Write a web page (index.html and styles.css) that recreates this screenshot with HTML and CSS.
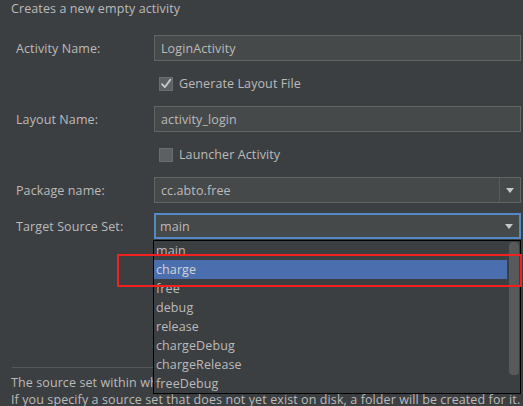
FILE: index.html
```html
<!DOCTYPE html>
<html>
<head>
<meta charset="utf-8">
<link rel="stylesheet" href="styles.css">
</head>
<body>
<div class="page">
  <div class="desc">Creates a new empty activity</div>
  <div class="form">
    <div class="label">Activity Name:</div>
    <div class="field"><span class="value">LoginActivity</span></div>

    <div class="check-row">
      <span class="box checked"><svg width="14" height="14" viewBox="0 0 14 14"><path d="M3 7.2 L5.8 10.2 L11.4 2.6" fill="none" stroke="#c9c9c9" stroke-width="1.8" stroke-linecap="round" stroke-linejoin="round"/></svg></span>
      <span class="check-text">Generate Layout File</span>
    </div>

    <div class="label">Layout Name:</div>
    <div class="field"><span class="value">activity_login</span></div>

    <div class="check-row">
      <span class="box"></span>
      <span class="check-text">Launcher Activity</span>
    </div>

    <div class="label top">Package name:</div>
    <div class="field combo top"><span class="value">cc.abto.free</span><span class="arrow-btn sep"><svg width="8" height="5" viewBox="0 0 8 5"><path d="M0 0 H8 L4 5 Z" fill="#c8c8c8"/></svg></span></div>

    <div class="label">Target Source Set:</div>
    <div class="field combo focused"><span class="value">main</span><span class="arrow-btn"><svg width="8" height="5" viewBox="0 0 8 5"><path d="M0 0 H8 L4 5 Z" fill="#c8c8c8"/></svg></span></div>
  </div>

  <div class="sep-line"></div>
  <div class="help">
    <div>The source set within which to generate new project files.</div>
    <div>If you specify a source set that does not yet exist on disk, a folder will be created for it.</div>
  </div>
</div>

<div class="popup">
  <ul class="list">
    <li>main</li>
    <li class="selected">charge</li>
    <li>free</li>
    <li>debug</li>
    <li>release</li>
    <li>chargeDebug</li>
    <li>chargeRelease</li>
    <li>freeDebug</li>
  </ul>
  <div class="scrollbar"><div class="thumb"></div></div>
</div>

<div class="highlight-mark"></div>
</body>
</html>
```

FILE: styles.css
```css
html, body {
  margin: 0;
  padding: 0;
}
body {
  width: 523px;
  height: 406px;
  overflow: hidden;
  position: relative;
  background: #3c3f41;
  color: #bbbbbb;
  font-family: "Open Sans", "Noto Sans", sans-serif;
  font-size: 12.5px;
  letter-spacing: 0.1px;
}
.page {
  display: flex;
  flex-direction: column;
}
.desc {
  padding-left: 11px;
  line-height: 18px;
}
.form {
  margin-top: 17px;
  padding-left: 16px;
  display: grid;
  grid-template-columns: 138px 367px;
  grid-template-rows: 26px 45px 26px 45px 36px 26px;
}
.label {
  display: flex;
  align-items: center;
  height: 26px;
}
.field {
  box-sizing: border-box;
  height: 26px;
  border: 1px solid #646464;
  background: #45494a;
  display: flex;
  align-items: center;
}
.field .value {
  flex: 1;
  padding-left: 6px;
}
.field.focused {
  border: 2px solid #5389c4;
}
.field.focused .value {
  padding-left: 4px;
}
.arrow-btn {
  width: 20px;
  align-self: stretch;
  display: flex;
  align-items: center;
  justify-content: center;
}
.arrow-btn.sep {
  border-left: 1px solid #5a5a5a;
}
.focused .arrow-btn {
  width: 21px;
}
.check-row {
  grid-column: 2;
  display: flex;
  align-items: center;
  padding-left: 5px;
}
.box {
  box-sizing: border-box;
  width: 14px;
  height: 14px;
  background: #5d6063;
  border: 1px solid #6a6d70;
  display: flex;
}
.box svg {
  margin: -1px;
}
.check-text {
  margin-left: 6px;
}
.sep-line {
  margin: 128px 12px 0 12px;
  height: 1px;
  background: #555759;
}
.help {
  padding: 6px 0 0 11px;
  line-height: 17px;
  white-space: nowrap;
}
.popup {
  position: absolute;
  left: 153px;
  top: 240px;
  width: 368px;
  height: 154px;
  box-sizing: border-box;
  border: 1px solid #000;
  background: #3c3f41;
  display: flex;
}
.list {
  list-style: none;
  margin: 0;
  padding: 0;
  flex: 1;
}
.list li {
  height: 19px;
  line-height: 19px;
  padding-left: 2px;
}
.list li.selected {
  background: #4b6eaf;
  color: #d4d4d4;
}
.scrollbar {
  width: 13px;
  padding: 1px 1px 0 2px;
  box-sizing: border-box;
}
.thumb {
  height: 133px;
  background: #57595b;
  border-radius: 4px;
}
.highlight-mark {
  position: absolute;
  left: 117px;
  top: 254px;
  width: 405px;
  height: 33px;
  box-sizing: border-box;
  border: 2.5px solid #f2201e;
}
```
